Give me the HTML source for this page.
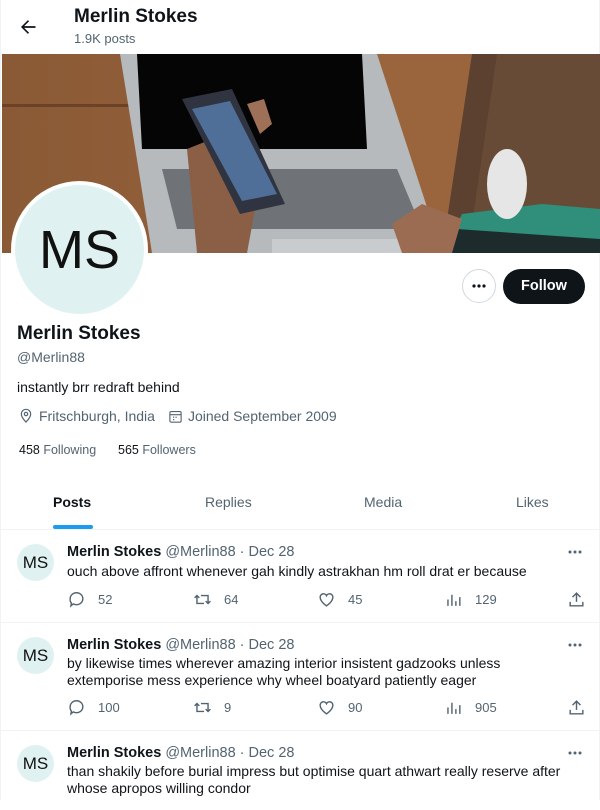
<!DOCTYPE html>
<html><head><meta charset="utf-8"><style>
*{margin:0;padding:0;box-sizing:border-box}
body{width:600px;height:800px;overflow:hidden;background:#fff;font-family:"Liberation Sans",sans-serif;color:#0f1419;position:relative;border-left:1px solid #eff3f4;border-right:1px solid #eff3f4}
.abs{position:absolute}
.g{color:#536471}
.post{position:absolute;left:0;width:600px;border-top:1px solid #eff3f4}
.av{position:absolute;left:16px;width:37px;height:37px;border-radius:50%;background:#dff2f1;font-size:17px;display:flex;align-items:center;justify-content:center;color:#111}
.nm{position:absolute;left:66px;font-size:14.5px;white-space:nowrap}
.nm b{font-weight:700}
.bd{position:absolute;left:66px;font-size:14px;line-height:17px;width:500px}
.act{position:absolute;font-size:13px;color:#536471;display:flex;align-items:center}
.act svg{width:19px;height:19px;margin-right:12px}
.dots{position:absolute;right:18px;width:16px;height:6px}
</style></head><body>
<svg class="abs" style="left:17px;top:17px" width="20" height="20" viewBox="0 0 24 24"><path d="M7.4 11l5.9-5.9-1.4-1.4L3.6 12l8.3 8.3 1.4-1.4L7.4 13H21v-2z" fill="#0f1419"/></svg>
<div class="abs" style="left:73px;top:6px;font-size:19px;font-weight:700">Merlin Stokes</div>
<div class="abs g" style="left:73px;top:31px;font-size:13px">1.9K posts</div>

<svg class="abs" style="left:1px;top:54px" width="598" height="199" viewBox="0 0 598 199">
<defs><linearGradient id="w" x1="0" x2="1"><stop offset="0" stop-color="#8a5a36"/><stop offset="1" stop-color="#a0683e"/></linearGradient></defs>
<rect width="598" height="199" fill="url(#w)"/>
<rect x="0" y="50" width="130" height="3" fill="#6b4228"/>
<rect x="375" y="0" width="120" height="199" fill="#9a653d"/>
<path d="M118 0H375L440 199H150Z" fill="#b6babd"/>
<path d="M135 0H360L365 95H140Z" fill="#050505"/>
<path d="M160 115H395L420 175H175Z" fill="#6f7378"/>
<rect x="270" y="185" width="130" height="14" fill="#c9ccce"/>
<path d="M470 0H598V199H440Z" fill="#5c4030"/>
<path d="M495 0H598V170H470Z" fill="#6b4d3a" opacity=".8"/>
<path d="M440 199L460 160L540 150L598 155V199Z" fill="#2f8f7a"/>
<path d="M430 199L455 175L598 185V199Z" fill="#1e2b2c"/>
<ellipse cx="505" cy="130" rx="20" ry="35" fill="#e6e6e6"/>
<path d="M390 170L420 150L460 165L450 199H400Z" fill="#9b6c52"/>
<path d="M185 95L210 85L255 145L245 199H195Z" fill="#8a5f46"/>
<path d="M180 45L230 35L283 150L238 160Z" fill="#2f3440"/>
<path d="M190 55L228 47L275 140L240 147Z" fill="#4f6f98"/>
<path d="M245 50L262 45L270 70L258 80Z" fill="#9e7058"/>
</svg>
<div class="abs" style="left:10px;top:181px;width:137px;height:137px;border-radius:50%;background:#fff"></div>
<div class="abs" style="left:14px;top:185px;width:129px;height:129px;border-radius:50%;background:#dff2f1;display:flex;align-items:center;justify-content:center;font-size:54px;color:#111">MS</div>

<div class="abs" style="left:461px;top:269px;width:34px;height:34px;border:1px solid #cfd9de;border-radius:50%"><svg style="position:absolute;left:9px;top:14px" width="14" height="4"><circle cx="2" cy="2" r="1.6" fill="#0f1419"/><circle cx="7" cy="2" r="1.6" fill="#0f1419"/><circle cx="12" cy="2" r="1.6" fill="#0f1419"/></svg></div>
<div class="abs" style="left:502px;top:269px;width:82px;height:35px;border-radius:18px;background:#0f1419;color:#fff;font-weight:700;font-size:14.5px;text-align:center;line-height:35px">Follow</div>

<div class="abs" style="left:16px;top:323px;font-size:19px;font-weight:700">Merlin Stokes</div>
<div class="abs g" style="left:16px;top:349px;font-size:14px">@Merlin88</div>
<div class="abs" style="left:16px;top:379px;font-size:14px">instantly brr redraft behind</div>
<div class="abs g" style="left:17px;top:408px;font-size:14px;display:flex;align-items:center">
<svg width="16" height="16" viewBox="0 0 24 24" fill="none" stroke="#536471" stroke-width="1.8"><path d="M12 21s-7-6.5-7-12a7 7 0 0114 0c0 5.5-7 12-7 12z"/><circle cx="12" cy="9" r="2.5"/></svg>
<span style="margin-left:5px">Fritschburgh, India</span>
<svg style="margin-left:13px" width="15" height="15" viewBox="0 0 24 24" fill="none" stroke="#536471" stroke-width="1.8"><rect x="3" y="4" width="18" height="17" rx="2"/><path d="M3 9h18M8 13h2M12 13h2M8 17h2"/></svg>
<span style="margin-left:5px">Joined September 2009</span></div>
<div class="abs" style="left:18px;top:443px;font-size:12.5px">458 <span class="g">Following</span></div>
<div class="abs" style="left:117px;top:443px;font-size:12.5px">565 <span class="g">Followers</span></div>

<div class="abs" style="left:52px;top:494px;font-size:14px;font-weight:700">Posts</div>
<div class="abs" style="left:52px;top:525px;width:40px;height:4px;border-radius:2px;background:#1d9bf0"></div>
<div class="abs g" style="left:204px;top:494px;font-size:14px">Replies</div>
<div class="abs g" style="left:363px;top:494px;font-size:14px">Media</div>
<div class="abs g" style="left:515px;top:494px;font-size:14px">Likes</div>

<div class="post" style="top:529px;height:94px">
<div class="av" style="top:14px">MS</div>
<div class="nm" style="top:14px"><b>Merlin Stokes</b> <span class="g">@Merlin88 · Dec 28</span></div>
<svg class="dots" style="top:19px" viewBox="0 0 16 6"><circle cx="3" cy="3" r="1.5" fill="#536471"/><circle cx="8" cy="3" r="1.5" fill="#536471"/><circle cx="13" cy="3" r="1.5" fill="#536471"/></svg>
<div class="bd" style="top:33px">ouch above affront whenever gah kindly astrakhan hm roll drat er because</div>
<div class="act" style="left:66px;top:60px"><svg viewBox="0 0 24 24" fill="none" stroke="#536471" stroke-width="1.8"><path d="M4 11a8 7.5 0 1116 0 8 7.5 0 01-12 6.5L5 20l.5-3.5A7 7 0 014 11z"/></svg>52</div>
<div class="act" style="left:192px;top:60px"><svg viewBox="0 0 24 24" fill="none" stroke="#536471" stroke-width="1.8"><path d="M5 8v9h9M2 10l3-3 3 3M19 16V7h-9M22 14l-3 3-3-3"/></svg>64</div>
<div class="act" style="left:316px;top:60px"><svg viewBox="0 0 24 24" fill="none" stroke="#536471" stroke-width="1.8"><path d="M12 20s-8-5-8-11a4.2 4.2 0 018-1.8A4.2 4.2 0 0120 9c0 6-8 11-8 11z"/></svg>45</div>
<div class="act" style="left:443px;top:60px"><svg viewBox="0 0 24 24" fill="none" stroke="#536471" stroke-width="1.8"><path d="M5 20v-8M10 20V6M15 20v-6M20 20V9"/></svg>129</div>
<svg class="abs" style="left:566px;top:60px" width="19" height="19" viewBox="0 0 24 24" fill="none" stroke="#536471" stroke-width="1.8"><path d="M12 15V4M7 9l5-5 5 5M4 15v5h16v-5"/></svg>
</div>

<div class="post" style="top:622px;height:109px">
<div class="av" style="top:14px">MS</div>
<div class="nm" style="top:14px"><b>Merlin Stokes</b> <span class="g">@Merlin88 · Dec 28</span></div>
<svg class="dots" style="top:19px" viewBox="0 0 16 6"><circle cx="3" cy="3" r="1.5" fill="#536471"/><circle cx="8" cy="3" r="1.5" fill="#536471"/><circle cx="13" cy="3" r="1.5" fill="#536471"/></svg>
<div class="bd" style="top:32px">by likewise times wherever amazing interior insistent gadzooks unless extemporise mess experience why wheel boatyard patiently eager</div>
<div class="act" style="left:66px;top:75px"><svg viewBox="0 0 24 24" fill="none" stroke="#536471" stroke-width="1.8"><path d="M4 11a8 7.5 0 1116 0 8 7.5 0 01-12 6.5L5 20l.5-3.5A7 7 0 014 11z"/></svg>100</div>
<div class="act" style="left:192px;top:75px"><svg viewBox="0 0 24 24" fill="none" stroke="#536471" stroke-width="1.8"><path d="M5 8v9h9M2 10l3-3 3 3M19 16V7h-9M22 14l-3 3-3-3"/></svg>9</div>
<div class="act" style="left:316px;top:75px"><svg viewBox="0 0 24 24" fill="none" stroke="#536471" stroke-width="1.8"><path d="M12 20s-8-5-8-11a4.2 4.2 0 018-1.8A4.2 4.2 0 0120 9c0 6-8 11-8 11z"/></svg>90</div>
<div class="act" style="left:443px;top:75px"><svg viewBox="0 0 24 24" fill="none" stroke="#536471" stroke-width="1.8"><path d="M5 20v-8M10 20V6M15 20v-6M20 20V9"/></svg>905</div>
<svg class="abs" style="left:566px;top:75px" width="19" height="19" viewBox="0 0 24 24" fill="none" stroke="#536471" stroke-width="1.8"><path d="M12 15V4M7 9l5-5 5 5M4 15v5h16v-5"/></svg>
</div>

<div class="post" style="top:730px;height:80px">
<div class="av" style="top:14px">MS</div>
<div class="nm" style="top:14px"><b>Merlin Stokes</b> <span class="g">@Merlin88 · Dec 28</span></div>
<svg class="dots" style="top:19px" viewBox="0 0 16 6"><circle cx="3" cy="3" r="1.5" fill="#536471"/><circle cx="8" cy="3" r="1.5" fill="#536471"/><circle cx="13" cy="3" r="1.5" fill="#536471"/></svg>
<div class="bd" style="top:32px;width:520px">than shakily before burial impress but optimise quart athwart really reserve after whose apropos willing condor</div>
</div>
</body></html>
